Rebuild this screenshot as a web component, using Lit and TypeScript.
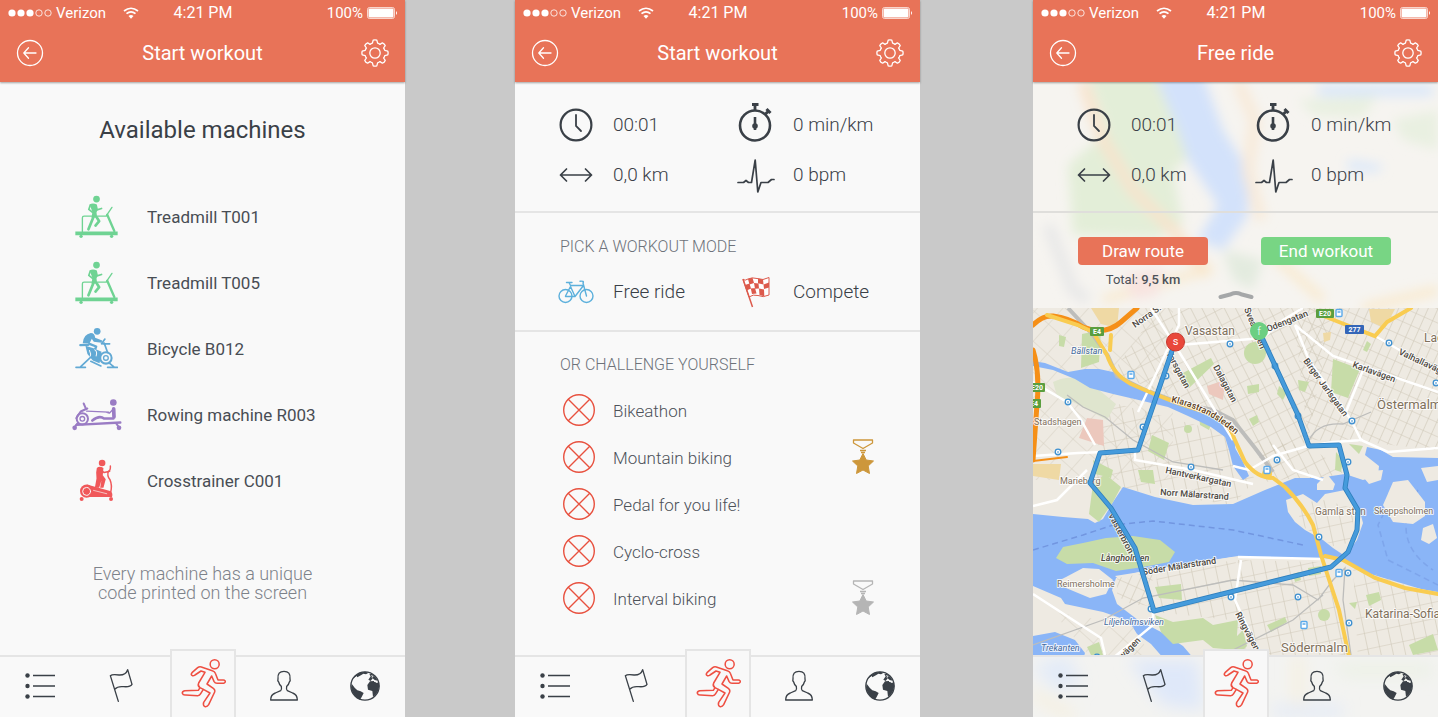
import { LitElement, html, svg, css } from "lit";
import { customElement, property } from "lit/decorators.js";

/* ---------- shared icon drawings ---------- */

const icons: Record<string, any> = {
  back: html`<svg width="28" height="28" viewBox="0 0 28 28" fill="none" stroke="#fff" stroke-width="1.3" stroke-linecap="round" stroke-linejoin="round"><circle cx="14" cy="14" r="12.5"/><path d="M20 14H8M12.5 8.7 7.8 14l4.7 5.3"/></svg>`,
  gear: html`<svg width="28" height="28" viewBox="-14 -14 28 28" fill="none" stroke="#fff" stroke-width="1.3" stroke-linejoin="round"><circle r="5.2"/><path d="M-1.8 -12.8Q0 -13.4 1.8 -12.8L2.6 -9.8 Q4 -9.4 5 -8.6 L7.4 -10.2Q9.400 -9.400 10.2 -7.4 L8.6 -5 Q9.4 -4 9.8 -2.6 L12.8 -1.8Q13.4 0 12.8 1.8L9.8 2.6 Q9.4 4 8.6 5 L10.2 7.4Q9.400 9.400 7.4 10.2 L5 8.6 Q4 9.4 2.6 9.8 L1.8 12.8Q0 13.4 -1.8 12.8L-2.6 9.8 Q-4 9.4 -5 8.6 L-7.4 10.2Q-9.400 9.400 -10.2 7.4 L-8.6 5 Q-9.4 4 -9.8 2.6 L-12.8 1.8Q-13.4 0 -12.8 -1.8L-9.8 -2.6 Q-9.4 -4 -8.6 -5 L-10.2 -7.4Q-9.400 -9.400 -7.4 -10.2 L-5 -8.6 Q-4 -9.4 -2.6 -9.8Z"/></svg>`,
  list: html`<svg width="32" height="28" viewBox="0 0 32 28" stroke="#3a4047" stroke-width="1.5" fill="#3a4047"><path d="M8 3.500h22M8 14h22M8 24.500h22"/><g stroke="none"><circle cx="2.5" cy="3.500" r="2.2"/><circle cx="2.5" cy="14" r="2.2"/><circle cx="2.5" cy="24.500" r="2.2"/></g></svg>`,
  flag: html`<svg width="26" height="36" viewBox="328 82 78 108" fill="none" stroke="#3a4047" stroke-width="4" stroke-linecap="round" stroke-linejoin="round"><path d="M356 182 332 105Q338 100 358 103Q378 104 384 87L397 131Q391 140 372 138Q354 136 346 145"/></svg>`,
  runner: html`<svg width="46" height="50" viewBox="544 55 138 150" fill="none" stroke="#ee4f42" stroke-width="4.6" stroke-linejoin="round" stroke-linecap="round"><circle cx="645" cy="74" r="13.5"/><path d="M638 93 605 82Q599 80 594 84L577 99Q572 105 578 108Q582 109 586 106L604 94 616 98 597 130Q593 139 601 144L596 152 555 153Q547 155 548 161Q550 167 558 166L594 168Q600 168 603 162L611 149 631 160 612 188Q609 198 616 201Q623 202 627 195L645 157Q647 150 641 146L622 133 636 109 643 125Q646 131 652 131L672 131Q679 128 676 123Q674 120 668 121L655 121 647 101Q645 95 638 93ZM601 144 611 149"/></svg>`,
  person: html`<svg width="30" height="32" viewBox="811 88 90 96" fill="none" stroke="#3a4047" stroke-width="4" stroke-linejoin="round"><path d="M816 178Q816 162 830 157L846 150Q850 147 848 137Q842 133 840 124Q836 120 838 114Q836 92 856 92Q876 92 874 114Q876 120 872 124Q870 133 864 137Q862 147 866 150L882 157Q896 162 896 178Z"/></svg>`,
  globe: html`<svg width="30" height="30" viewBox="0 0 90 90"><circle cx="45" cy="45" r="42.5" fill="none" stroke="#3a4047" stroke-width="4"/><g fill="#3a4047"><path d="M45 2Q20 4 10 22L20 15 22 19 34 12 40 8 48 10 56 5Z"/><path d="M5 38 14 50 22 58 32 61 41 66 35 78 30 86Q8 74 3 50Z"/><path d="M52 42 60 31 72 30 80 36 86 34 88 46Q86 62 76 73L69 77 67 60 54 56Z"/><path d="M55 26 62 16 58 10 66 8 78 20 83 29 74 27 68 22 62 30Z"/></g><path d="M64 14l5 2-3 4M72 31l6 1" stroke="#f8f8f8" stroke-width="3" fill="none"/></svg>`,
  clock: html`<svg width="34" height="34" viewBox="0 0 34 34" fill="none" stroke="#3a4047" stroke-width="2.2" stroke-linecap="round"><circle cx="17" cy="17" r="15.4"/><path d="M17 7v11l5 5" stroke-width="1.8"/></svg>`,
  distance: html`<svg width="34" height="16" viewBox="0 0 34 16" fill="none" stroke="#3a4047" stroke-width="1.7" stroke-linecap="round" stroke-linejoin="round"><path d="M1.5 8h31M7.5 2 1.5 8l6 6M26.500 2l6 6-6 6"/></svg>`,
  stopwatch: html`<svg width="36" height="47" viewBox="0 0 36 47" fill="none" stroke="#3a4047"><circle cx="17" cy="23.500" r="15" stroke-width="2.600"/><path d="M17 8V2M14 2.500h6.500" stroke-width="2.800"/><path d="m27.500 12 3-3M28.500 7l4 4" stroke-width="3"/><path d="M17 15v13" stroke-width="2.600"/><circle cx="17" cy="24" r="2.800" fill="#3a4047" stroke="none"/></svg>`,
  pulse: html`<svg width="38" height="36" viewBox="0 -1 38 36" fill="none" stroke="#3a4047" stroke-width="1.700" stroke-linejoin="round" stroke-linecap="round"><path d="M1 24.500H6.500L9 22.500 11.500 24.500H14.500L18.200 2 20.800 34 24 24.500H31L34.500 21.500H37"/></svg>`,
  bike: html`<svg width="36" height="24" viewBox="0 0 36 24" fill="none" stroke="#5cb0dc" stroke-width="1.400" stroke-linejoin="round" stroke-linecap="round"><circle cx="7.500" cy="16" r="6.500"/><circle cx="28.500" cy="16" r="6.500"/><path d="M7.500 16 12.500 6.500 17 16.500H7.500M17 16.500 25.500 5.500H12.500L11 2.500M8.500 2.500H14M28.500 16 25 3Q26.500 .8 22 1.200"/></svg>`,
  checkered: html`<svg width="28" height="31" viewBox="0 0 28 31"><path d="M1 2.500Q3 4 6 2Q10 0 15 1.500Q21 4 27 .5L27 18Q21 21 16 18.500Q11 17 7 20Z" fill="#fff" stroke="#dc5a4c" stroke-width="1"/><g fill="#dc5a4c"><path d="M6 2 10.500 .8 12 6 7.500 7.500ZM16 1.500l5 1 .5 5-5.500-1.200ZM3 8l4.500-1.500L9 11.500 4.500 13.500ZM12 6l4.500.5.500 5-4 .2ZM21.500 7.500 27 5.500v5l-5 1.500ZM8.800 11.500l4.200-.5 1.500 5.500-4.500.5ZM17 11.500l5 1 .3 6.800L17.500 18Z"/></g><path d="M1 2 10.500 30" stroke="#dc5a4c" stroke-width="1.500"/></svg>`,
  cross: html`<svg width="34" height="34" viewBox="0 0 34 34" fill="none" stroke="#e8513f" stroke-width="1.400"><circle cx="17" cy="16" r="15.300"/><path d="M6 5 28 27M28 5 6 27"/></svg>`,
  treadmill: html`<svg width="43" height="43" viewBox="45 40 128 128" fill="none" stroke="#6fd393" stroke-linecap="round" stroke-linejoin="round"><g fill="#6fd393" stroke="none"><circle cx="109" cy="52" r="10"/><path d="M46 149H172V160H46Z"/><circle cx="63" cy="163" r="5"/><circle cx="154" cy="163" r="5"/><path d="M88 68Q98 62 110 68L113 82 109 92 111 108H94L97 90Z"/></g><path d="M67 149V108Q67 103 72 103H138M138 102 155 77" stroke-width="4"/><path d="M141 99 162 147" stroke-width="7"/><path d="M90 71 86 83 98 92M108 85 124 80" stroke-width="5"/><path d="M99 108 85 142M110 107 117 118 106 131" stroke-width="8"/></svg>`,
  bicycle: html`<svg width="43" height="42" viewBox="45 440 128 125" fill="none" stroke="#62a9d4" stroke-linecap="round" stroke-linejoin="round"><g fill="#62a9d4" stroke="none"><circle cx="111" cy="453" r="10"/><path d="M68 488Q70 462 92 458Q104 458 105 472L126 480 124 487 101 484 95 475 88 489Z"/><path d="M76 496 100 503 124 514 118 548 98 540 82 520Z"/></g><circle cx="137" cy="532" r="17" stroke-width="6"/><circle cx="137" cy="532" r="7" stroke-width="4"/><path d="M61 494 84 493M88 490 108 498 100 520" stroke-width="7"/><path d="M88 510Q94 520 90 530M104 508Q112 512 108 526" stroke="#f9f9f9" stroke-width="3"/><path d="M124 490 134 476M128 490 148 490M132 488 142 516M48 560H76M142 560H171M62 558 92 530M148 548 160 558M92 542 122 556" stroke-width="5"/></svg>`,
  rowing: html`<svg width="50" height="33" viewBox="36 120 150 98" fill="none" stroke="#9a7cc4" stroke-linecap="round" stroke-linejoin="round"><g fill="#9a7cc4" stroke="none"><circle cx="160" cy="133" r="10"/><circle cx="44" cy="209" r="7"/><circle cx="177" cy="209" r="7"/></g><circle cx="67" cy="182" r="17" stroke-width="6"/><circle cx="67" cy="182" r="7" stroke-width="4"/><path d="M49 180 62 160 82 151M71 136 77 150M46 204 52 196M168 195 176 206" stroke-width="6"/><path d="M50 200 181 193" stroke-width="7"/><path d="M80 159 146 162M158 155 148 165 138 162" stroke-width="4"/><path d="M161 152 162 176" stroke-width="11"/><path d="M97 187Q118 170 132 181L160 181" stroke-width="8"/></svg>`,
  crosstrainer: html`<svg width="35" height="43" viewBox="56 300 106 128" fill="none" stroke="#f0585a" stroke-linecap="round" stroke-linejoin="round"><g fill="#f0585a" stroke="none"><circle cx="126" cy="311" r="10"/><path d="M110 326Q118 318 130 326L128 348 137 360 130 386 120 386 124 364 117 386H104L109 358 108 340Z"/><circle cx="79" cy="396" r="20"/><path d="M80 376 150 396Q160 402 156 414L84 414Z"/><circle cx="64" cy="420" r="6"/><circle cx="153" cy="420" r="6"/></g><circle cx="79" cy="397" r="12" stroke="#f9f9f9" stroke-width="3"/><path d="M122 332 132 340 149 336M151 320Q152 334 145 336Q140 350 150 362Q157 378 152 400" stroke-width="4.500"/><path d="M100 394 140 404" stroke="#f9f9f9" stroke-width="2"/></svg>`,
  wifi: html`<svg width="16" height="12" viewBox="0 0 16 12" fill="none" stroke="#fff" stroke-width="1.700"><path d="M1 4Q8-1.500 15 4M3.500 6.700Q8 3 12.500 6.700"/><path d="M5.500 9Q8 7 10.500 9L8 11.800Z" fill="#fff" stroke="none"/></svg>`,
  battery: html`<svg width="31" height="12" viewBox="0 0 31 12"><rect x=".5" y=".5" width="27" height="11" rx="2" fill="none" stroke="#fff" stroke-opacity=".7"/><rect x="1.500" y="1.500" width="25" height="9" rx="1" fill="#fff"/><path d="M29 4Q31 6 29 8Z" fill="#fff"/></svg>`,
  signal: html`<svg width="45" height="8" viewBox="0 0 45 8" fill="#fff"><circle cx="4" cy="4" r="3.600"/><circle cx="13" cy="4" r="3.600"/><circle cx="22" cy="4" r="3.600"/><g fill="none" stroke="#fff" stroke-width=".8"><circle cx="31" cy="4" r="3.200"/><circle cx="40" cy="4" r="3.200"/></g></svg>`,
  chevron: html`<svg width="36" height="10" viewBox="0 0 36 10" fill="none" stroke="#a5a7a8" stroke-width="4" stroke-linecap="round" stroke-linejoin="round"><path d="M2.500 7 13 4.200Q18 2 23 4.200L33.500 7"/></svg>`,
};

const medal = (color: string) => html`<svg width="24" height="38" viewBox="0 0 24 38" fill="none" stroke=${color} stroke-linejoin="round"><path d="M2.500 1H21.500V4L12 9.500 2.500 4Z" stroke-width="1.300"/><path d="M9 11.500H15M10 13.500H14" stroke-width="1.500"/><path d="M12 14.500 15.200 21 22.500 22 17.200 27 18.500 34.500 12 31 5.500 34.500 6.800 27 1.500 22 8.800 21Z" fill=${color} stroke-width="1"/></svg>`;

const base = css`
  :host { display: block; font-family: Roboto, sans-serif; color: #3a4047; }
  * { box-sizing: border-box; }
  svg { display: block; flex: none; }
  button { font: inherit; color: inherit; background: none; border: 0; padding: 0; margin: 0; text-align: left; cursor: pointer; }
  ul { list-style: none; margin: 0; padding: 0; }
  h1, h2, p { margin: 0; font-weight: 400; }
`;

/* ---------- header ---------- */

@customElement("top-bar")
class TopBar extends LitElement {
  @property() heading = "";
  static styles = [base, css`
    :host { position: relative; z-index: 2; height: 82px; background: #e87358; color: #fff; box-shadow: 0 1px 2px rgba(0, 0, 0, .35); }
    .status { display: grid; grid-template-columns: 1fr auto 1fr; align-items: center; height: 26px; padding: 0 7px 0 8px; font-size: 15px; line-height: 18px; }
    .carrier { display: flex; align-items: center; gap: 3px; }
    .wifi { margin-left: 14px; }
    .time { font-size: 16px; }
    .power { display: flex; align-items: center; justify-content: flex-end; gap: 4px; }
    .bar { display: flex; align-items: center; justify-content: space-between; height: 53px; padding: 0 16px; }
    h1 { font-size: 20px; line-height: 24px; }
  `];
  render() {
    return html`
      <div class="status">
        <div class="carrier">${icons.signal}<span>Verizon</span><span class="wifi">${icons.wifi}</span></div>
        <span class="time">4:21 PM</span>
        <div class="power"><span>100%</span>${icons.battery}</div>
      </div>
      <div class="bar">
        <button aria-label="Back">${icons.back}</button>
        <h1>${this.heading}</h1>
        <button aria-label="Settings">${icons.gear}</button>
      </div>`;
  }
}

/* ---------- bottom tabs ---------- */

@customElement("tab-bar")
class TabBar extends LitElement {
  static styles = [base, css`
    nav { display: grid; grid-template-columns: repeat(5, 1fr); height: 62px; border-top: 2px solid #e5e5e5; }
    a { display: grid; place-items: center; padding-bottom: 3px; }
    .active { justify-self: center; width: 66px; margin-top: -8px; padding: 0 0 2px 2px; background: #f8f8f8; border: 2px solid #e5e5e5; border-bottom: 0; }
  `];
  render() {
    return html`<nav>
      <a href="#list" aria-label="List">${icons.list}</a>
      <a href="#goals" aria-label="Goals">${icons.flag}</a>
      <a class="active" href="#workout" aria-label="Workout">${icons.runner}</a>
      <a href="#profile" aria-label="Profile">${icons.person}</a>
      <a href="#world" aria-label="World">${icons.globe}</a>
    </nav>`;
  }
}

/* ---------- live statistics ---------- */

@customElement("workout-stats")
class WorkoutStats extends LitElement {
  static styles = [base, css`
    ul { display: grid; grid-template-columns: 1fr 1fr; grid-template-rows: 50px 50px; height: 131px; padding: 18px 2px 0 43px; border-bottom: 2px solid #e5e5e5; }
    :host([clear]) ul { border-color: #dfdedb; }
    li { display: flex; align-items: center; gap: 19px; font-size: 19px; line-height: 24px; font-weight: 300; }
    .slot { display: flex; justify-content: center; width: 36px; }
  `];
  render() {
    const stats = [["clock", "00:01"], ["stopwatch", "0 min/km"], ["distance", "0,0 km"], ["pulse", "0 bpm"]];
    return html`<ul>${stats.map(([icon, value]) => html`<li><span class="slot">${icons[icon]}</span>${value}</li>`)}</ul>`;
  }
}

/* ---------- screens ---------- */

@customElement("machines-screen")
class MachinesScreen extends LitElement {
  static styles = [base, css`
    :host { display: flex; flex-direction: column; flex: 1; }
    main { flex: 1; }
    h2 { padding-top: 34px; font-size: 24px; line-height: 28px; text-align: center; }
    ul { padding: 40px 0 0 70px; }
    .machine { display: flex; align-items: center; gap: 24px; width: 100%; height: 66px; font-size: 17px; line-height: 20px; color: #484d54; }
    .slot { display: flex; justify-content: center; width: 53px; padding-bottom: 2px; }
    p { padding-top: 50px; font-size: 18px; line-height: 19px; font-weight: 300; color: #7d828a; text-align: center; }
  `];
  render() {
    const machines = [
      ["treadmill", "Treadmill T001"],
      ["treadmill", "Treadmill T005"],
      ["bicycle", "Bicycle B012"],
      ["rowing", "Rowing machine R003"],
      ["crosstrainer", "Crosstrainer C001"],
    ];
    return html`
      <top-bar heading="Start workout"></top-bar>
      <main>
        <h2>Available machines</h2>
        <ul>${machines.map(([icon, name]) => html`<li><button class="machine"><span class="slot">${icons[icon]}</span>${name}</button></li>`)}</ul>
        <p>Every machine has a unique<br>code printed on the screen</p>
      </main>
      <tab-bar></tab-bar>`;
  }
}

@customElement("modes-screen")
class ModesScreen extends LitElement {
  static styles = [base, css`
    :host { display: flex; flex-direction: column; flex: 1; }
    main { flex: 1; }
    h2 { padding-left: 45px; font-size: 16px; line-height: 20px; font-weight: 300; color: #6d727a; }
    .modes { height: 119px; padding-top: 24px; border-bottom: 2px solid #e5e5e5; }
    .choices { display: grid; grid-template-columns: 1fr 1fr; padding: 15px 2px 0 43px; }
    .mode { display: flex; align-items: center; gap: 19px; height: 40px; font-size: 19px; line-height: 24px; font-weight: 300; }
    .slot { display: flex; justify-content: center; width: 36px; }
    .challenges { padding-top: 23px; }
    .items { padding: 12px 45px 0 47px; }
    .challenge { display: grid; grid-template-columns: 34px 1fr auto; align-items: center; column-gap: 17px; width: 100%; height: 47px; font-size: 17px; line-height: 20px; font-weight: 300; color: #4d5259; }
  `];
  render() {
    const challenges: [string, string?][] = [
      ["Bikeathon"], ["Mountain biking", "#cd973b"], ["Pedal for you life!"], ["Cyclo-cross"], ["Interval biking", "#b5b5b5"],
    ];
    return html`
      <top-bar heading="Start workout"></top-bar>
      <main>
        <workout-stats></workout-stats>
        <section class="modes">
          <h2>PICK A WORKOUT MODE</h2>
          <div class="choices">
            <button class="mode"><span class="slot">${icons.bike}</span>Free ride</button>
            <button class="mode"><span class="slot">${icons.checkered}</span>Compete</button>
          </div>
        </section>
        <section class="challenges">
          <h2>OR CHALLENGE YOURSELF</h2>
          <ul class="items">${challenges.map(([name, color]) => html`<li><button class="challenge">${icons.cross}<span>${name}</span>${color ? medal(color) : ""}</button></li>`)}</ul>
        </section>
      </main>
      <tab-bar></tab-bar>`;
  }
}

/* ---------- map ---------- */

const route = "M142 342 105 450 67 453 57 483 78 508 102 548 121 611 298 567 315 552 324 530 325 510 312 488 314 475 306 445 276 446 265 415 226 331";

const stops = [[197, 344], [133, 376], [110, 427], [35, 402], [25, 452], [158, 467], [242, 366], [265, 416], [319, 421], [356, 343], [403, 383], [244, 460], [315, 462], [286, 537], [315, 573], [265, 597], [316, 623], [198, 597], [118, 609], [64, 657]];
const stations = [[98, 375], [234, 470], [306, 573], [271, 625], [306, 313]];

const roadLabels: [number, number, number, string][] = [
  [102, 328, -35, "Norra S."], [133, 353, 62, "Torsgatan"], [180, 367, 62, "Dalagatan"],
  [132, 473, 12, "Hantverkargatan"], [127, 495, 4, "Norr Mälarstrand"], [75, 515, 62, "Västerbron"],
  [110, 575, -9, "Söder Mälarstrand"], [91, 658, -45, "vägen"], [202, 614, 62, "Ringvägen"],
  [365, 354, 25, "Valhallavägen"], [319, 367, 20, "Karlavägen"], [270, 361, 54, "Birger Jarlsgatan"],
  [235, 332, -22, "Odengatan"], [211, 309, 68, "Sveavägen"],
];
const areas: [number, number, number, string][] = [
  [152, 335, 12, "Vasastan"], [1, 425, 9, "Stadshagen"], [27, 484, 9, "Marieberg"], [24, 587, 9, "Reimersholme"],
  [248, 652, 13, "Södermalm"], [332, 618, 12, "Katarina-Sofia"], [282, 515, 10, "Gamla stan"],
  [341, 514, 9, "Skeppsholmen"], [344, 409, 13, "Östermalm"], [391, 342, 12, "Ladugård"],
];
const waters: [number, number, string][] = [[38, 354, "Bällstan"], [71, 625, "Liljeholmsviken"], [8, 651, "Trekanten"]];
const shields: [number, number, number, string, string][] = [
  [57, 327, 14, "E4", "#5a9e3f"], [-4, 383, 16, "E20", "#5a9e3f"], [-6, 399, 14, "E4", "#5a9e3f"],
  [283, 309, 18, "E20", "#5a9e3f"], [312, 325, 19, "277", "#3466b8"],
];

@customElement("city-map")
class CityMap extends LitElement {
  static styles = [base, css`
    :host { display: flex; flex: 1 1 300px; min-height: 0; overflow: hidden; }
    svg { width: 100%; height: 100%; flex: 1; font-family: Roboto, sans-serif; }
    .halo { paint-order: stroke; stroke: #fff; stroke-opacity: .8; stroke-width: 2px; stroke-linejoin: round; }
    .road { font-size: 9px; font-weight: 500; fill: #4c4740; }
    .brown { fill: #5c3d20; }
    .area { fill: #80705c; }
    .water { font-size: 9px; font-style: italic; fill: #466a9d; }
    .shield { font-size: 7px; font-weight: 700; fill: #fff; text-anchor: middle; }
    .pin { font-size: 11px; fill: #fff; text-anchor: middle; }
  `];
  render() {
    return html`<svg viewBox="0 308 405 347" preserveAspectRatio="xMidYMin slice" role="img" aria-label="Route map">
      <defs>
        <pattern id="grid-a" width="10" height="15" patternUnits="userSpaceOnUse" patternTransform="rotate(-27)"><path d="M0 0H10M0 0V15" stroke="#cfc8b8" stroke-width="1.200" fill="none"/></pattern>
        <pattern id="grid-b" width="9" height="13" patternUnits="userSpaceOnUse" patternTransform="rotate(24)"><path d="M0 0H9M0 0V13" stroke="#cfc8b8" stroke-width="1.200" fill="none"/></pattern>
        <pattern id="grid-c" width="12" height="16" patternUnits="userSpaceOnUse" patternTransform="rotate(-12)"><path d="M0 0H12M0 0V16" stroke="#cfc8b8" stroke-width="1.200" fill="none"/></pattern>
        <pattern id="grid-d" width="19" height="23" patternUnits="userSpaceOnUse" patternTransform="rotate(42)"><path d="M0 0H19M0 0V23" stroke="#d6cfc1" stroke-width="1" fill="none"/></pattern>
      </defs>
      <path d="M0 308H405V660H0Z" fill="#eeeae2"/>
      <path d="M0 308H140V480H0Z" fill="url(#grid-d)"/>
      <path d="M108 308H300L275 440 240 470 205 430 140 398 80 372 110 330Z" fill="url(#grid-a)"/>
      <path d="M260 308H405V450L330 442 275 440Z" fill="url(#grid-b)"/>
      <path d="M70 400 200 435 222 480 200 505 60 485Z" fill="url(#grid-c)"/>
      <path d="M222 440 276 446 312 472 285 480 262 478 232 482Z" fill="url(#grid-a)"/>

      <g fill="#c7dca8">
        <path d="M49 334 68 330 66 362 48 368ZM26 335 33 337 31 347 26 346ZM148 374 178 358 181 364 156 388 148 385ZM300 359 327 369 315 398 298 392ZM119 435 136 443 131 460 115 451ZM166 415 180 419 176 430 167 425ZM334 341 338 344 334 352 330 350ZM265 380 276 382 272 392 266 390ZM214 386 226 384 226 392 215 394ZM246 386 254 392 250 400 244 394ZM216 419 224 415 226 422 220 426Z"/>
        <circle cx="222" cy="353" r="11"/><circle cx="155" cy="429" r="4"/>
        <path d="M105 470 120 470 122 484 108 482ZM60 460 80 470 78 478 62 474ZM316 444 330 446 326 454ZM303 452 310 460 308 472 302 470Z"/>
      </g>
      <path d="M20 382Q40 372 60 385L83 404 74 420 40 402 24 396Z" fill="#dfe5ce"/>
      <g fill="#ecc8bd"><path d="M54 418 70 420 71 446 46 438ZM174 386 192 380 190 400 176 394Z"/></g>
      <g fill="#efd9a4"><path d="M58 308 86 308 84 328 68 324ZM336 309 362 309 352 328 338 322ZM0 464 28 464 26 480 0 476ZM290 333 298 332 297 340 291 342Z"/></g>

      <g fill="#8ab5f7">
        <path d="M0 361 12 363 35 372 52 369 66 369 80 372 97 381 120 393 140 400 168 409 188 420 203 438 202 448 210 462 216 476 210 480 200 466 196 450 192 437 178 427 155 416 135 407 110 401 80 394 57 388 42 379 20 370 0 366Z"/>
        <path d="M0 514 30 517 55 519 62 523 70 519 80 502 90 487 122 497 160 505 200 504 232 490 262 478 285 478 312 474 330 480 345 476 346 466 332 455 334 447 348 450 360 457 405 458V592L370 586 340 575 310 560 290 558 230 558 205 556 160 563 110 571 83 578 79 590 84 604 105 620 128 632 150 646 162 660H132L118 644 104 634 96 621 70 612 32 604 28 598 0 586Z"/>
        <path d="M0 636 22 632 42 640 52 653 50 660H0Z"/>
      </g>
      <g fill="none" stroke="#7296e0" stroke-width="1.500" stroke-dasharray="6 4"><path d="M0 550 50 535 80 525 120 521 200 530 270 545"/><path d="M360 495 345 525 355 560 405 585M385 490Q355 540 400 570" stroke-opacity=".5"/></g>

      <path d="M23 558 30 547 50 543 73 538 100 536 127 540 142 552 136 562 110 567 83 571 60 563 34 564Z" fill="#c7dca8"/>
      <path d="M33 577 50 568 66 569 80 580 73 594 57 598 33 588 25 581Z" fill="#eeeae2"/>
      <path d="M253 500 270 494 284 503 292 494 312 490 326 508 330 523 324 540 312 556 300 548 290 540 272 530 262 522 255 512Z" fill="#eeeae2"/>
      <path d="M260 504 290 500 320 508 320 542 300 546 272 528Z" fill="url(#grid-c)"/>
      <path d="M284 484 294 474 302 484 300 490 284 490Z" fill="#eeeae2"/>
      <path d="M350 505 360 482 375 480 392 502 392 516 380 524 360 522Z" fill="#eeeae2"/>
      <path d="M390 528 400 524 404 538 396 544 388 540ZM326 472 350 470 348 480 336 484ZM388 468 405 466V480L394 482Z" fill="#eeeae2"/>
      <path d="M82 576 200 557 290 560 405 594V660H165L118 606Z" fill="#eeeae2"/>
      <path d="M84 578 120 572 118 606 98 604 84 596Z" fill="url(#grid-b)"/>
      <path d="M124 572 203 560 198 620 122 612ZM205 560 290 562 318 660H190ZM320 566 405 596V660H325Z" fill="url(#grid-c)"/>
      <path d="M20 612 100 625 120 660H60Z" fill="url(#grid-d)"/>
      <g fill="#c7dca8">
        <path d="M122 615 140 622 170 618 180 625 205 620 203 650 180 648 170 640 140 644 128 632ZM122 587 148 584 149 600 126 598ZM60 484 72 474 88 487 80 502 66 522 56 514ZM275 568 288 566 288 574 276 576ZM234 625 252 617 254 622 238 632ZM333 595 346 592 348 600 336 606ZM316 603 324 602 322 609ZM260 574 266 572 268 580 262 582ZM200 640 210 630 214 646 204 656ZM376 645 400 634 405 650 380 655Z"/>
        <circle cx="291" cy="615" r="6"/><path d="M54 647 66 642 70 655H58Z"/>
      </g>

      <g fill="none" stroke="#bdbdbb" stroke-width="2.500">
        <path d="M35 308 60 335 75 356 84 376 110 389 150 404 180 410 200 420 222 448 240 472" stroke-width="4"/>
        <path d="M34 395 50 407 72 417 100 440 140 462 190 470M0 645 70 620 110 598 200 580 260 585 285 600 300 580 312 568 310 600 318 655M200 650 260 620 290 595M276 440Q285 422 310 424L338 412" stroke-width="1.300"/>
      </g>
      <g fill="none" stroke="#fff" stroke-width="2.500">
        <path d="M146 308 146 325 105 412M118 308 145 350 200 440M146 345 230 338 250 320 270 308M262 325 300 356 405 392M262 325 276 360 318 420 328 440 355 452 405 448M342 336 405 372M0 456 45 453 70 452 105 450M102 452 102 460 160 470 220 484M275 446 240 456 216 470 200 466M276 446 300 442 330 440M0 506 24 500 42 482 54 470M0 594 40 620 68 638 72 655M120 612 120 625 80 658M208 560 202 600 225 650M290 480 260 470 240 445M205 557 290 559M0 382 34 402 48 420 62 445M330 370 313 412"/>
      </g>
      <g fill="none" stroke-linecap="round">
        <path d="M0 325Q10 315 20 316 36 318 50 327 72 336 88 322L104 308M0 350Q7 372 4 404L0 460" stroke="#f58f17" stroke-width="5"/>
        <path d="M0 461 34 457" stroke="#f58f17" stroke-width="2"/>
        <path d="M14 315 45 325 60 332 74 355Q80 374 98 384 120 394 142 402L178 414Q196 422 201 438L212 462Q224 478 240 478L252 487Q270 505 280 525L288 555 306 610 316 656M292 556 310 560 342 578 372 588 405 594M288 315 342 336 354 322 378 308M78 335 77 350" stroke="#f9cc51" stroke-width="4"/>
        <circle cx="234" cy="474" r="5" fill="#f9cc51"/>
      </g>

      ${stops.map(([x, y]) => svg`<circle cx=${x} cy=${y} r="2.800" fill="#fff" stroke="#3c8fd0" stroke-width="1.300"/><path d=${`M${x} ${y - 1}v2.500`} stroke="#3c8fd0"/>`)}
      ${stations.map(([x, y]) => svg`<rect x=${x - 3} y=${y - 3.5} width="6" height="7" rx="1" fill="#fff" stroke="#5aa9ea" stroke-width="1.400"/><path d=${`M${x - 1.5} ${y - 1}h3`} stroke="#5aa9ea" stroke-width="1.500"/>`)}

      ${roadLabels.map(([x, y, r, t]) => svg`<text class="road halo" transform=${`translate(${x} ${y}) rotate(${r})`}>${t}</text>`)}
      <defs><path id="klara" d="M138 402Q176 410 204 436"/></defs>
      <text class="road brown halo"><textPath href="#klara">Klarastrandsleden</textPath></text>
      <text class="road halo" x="68" y="561" font-style="italic">Långholmen</text>
      ${areas.map(([x, y, s, t]) => svg`<text class="area halo" x=${x} y=${y} font-size=${s}>${t}</text>`)}
      ${waters.map(([x, y, t]) => svg`<text class="water halo" x=${x} y=${y}>${t}</text>`)}
      ${shields.map(([x, y, w, t, c]) => svg`<rect x=${x} y=${y} width=${w} height="9" rx="1" fill=${c}/><text class="shield" x=${x + w / 2} y=${y + 7}>${t}</text>`)}

      <path d=${route} fill="none" stroke="#2f7fbd" stroke-width="5" stroke-linejoin="round"/>
      <path d=${route} fill="none" stroke="#459bdc" stroke-width="3.400" stroke-linejoin="round"/>
      <circle cx="142.500" cy="342" r="9" fill="#e9483b" stroke="#c9382d"/><text class="pin" x="142.500" y="345">s</text>
      <circle cx="226" cy="331" r="9" fill="#6ccf82"/><text class="pin" x="226" y="335" font-weight="300">f</text>
    </svg>`;
  }
}

@customElement("ride-screen")
class RideScreen extends LitElement {
  static styles = [base, css`
    :host { display: flex; flex-direction: column; flex: 1; min-height: 0; }
    main { display: flex; flex-direction: column; flex: 1; }
    .panel, .tabs { position: relative; overflow: hidden; background: #f6f4f0; }
    .tabs { overflow: visible; }
    .haze { position: absolute; inset: 0; width: 100%; height: 100%; }
    .content { position: relative; }
    .actions { display: flex; justify-content: space-between; padding: 24px 47px 0 45px; }
    .action { width: 130px; }
    .action button { width: 100%; height: 28px; border-radius: 4px; color: #fff; font-size: 17px; line-height: 20px; text-align: center; }
    .draw { background: #e87358; }
    .end { background: #78d584; }
    .total { padding-top: 6px; font-size: 13px; line-height: 18px; text-align: center; color: #4d5259; }
    .total b { font-weight: 500; }
    .handle { display: flex; margin: 1px auto 0; padding-bottom: 8px; }
  `];
  render() {
    return html`
      <top-bar heading="Free ride"></top-bar>
      <main>
        <section class="panel">
          <svg class="haze" viewBox="0 82 405 226" preserveAspectRatio="none" aria-hidden="true">
            <defs><filter id="soft" x="-20%" y="-20%" width="140%" height="140%"><feGaussianBlur stdDeviation="6"/></filter></defs>
            <g filter="url(#soft)">
              <path d="M55 75H120L145 120 165 150 140 170 150 225 125 238 40 235 35 165 75 130Z" fill="#e3eed8"/>
              <path d="M120 70H168L190 130 215 170 215 215 190 250 165 240 185 205 155 160 145 130Z" fill="#d3e2fb"/>
              <path d="M50 82 70 140 100 190 140 230 175 275" fill="none" stroke="#f8e3cc" stroke-width="11"/>
              <path d="M205 82 222 120 215 170 228 220" fill="none" stroke="#f8ead9" stroke-width="12"/>
              <path d="M285 85H400V96H285ZM315 160 350 165 345 172 315 170Z" fill="#d9e7fa"/>
              <path d="M360 120 405 110V150L370 140ZM265 100 345 95 330 118 280 115Z" fill="#e9f0e1"/>
              <path d="M15 225 40 290 55 300" stroke="#e8e8e8" stroke-width="12" fill="none"/>
              <path d="M190 250 230 260 220 290 200 280Z" fill="#e3ebdf"/>
              <path d="M70 300 180 268M240 255 290 300M330 308 405 290" stroke="#f9e9cc" stroke-width="8"/>
              <path d="M90 275 130 268 125 295 100 300Z" fill="#f8e4e0"/>
            </g>
          </svg>
          <div class="content">
            <workout-stats clear></workout-stats>
            <div class="actions">
              <div class="action"><button class="draw">Draw route</button><p class="total">Total: <b>9,5 km</b></p></div>
              <div class="action"><button class="end">End workout</button></div>
            </div>
            <button class="handle" aria-label="Collapse panel">${icons.chevron}</button>
          </div>
        </section>
        <city-map></city-map>
      </main>
      <div class="tabs">
        <svg class="haze" viewBox="0 0 405 62" preserveAspectRatio="none" aria-hidden="true">
          <defs><filter id="mist" x="-10%" y="-30%" width="120%" height="160%"><feGaussianBlur stdDeviation="8"/></filter></defs>
          <rect width="405" height="62" fill="#f3f3f1"/>
          <g filter="url(#mist)">
            <path d="M0 10 35 0 50 30 20 35Z" fill="#e3ebf8"/><path d="M95 5H165L170 55 130 50Z" fill="#dfe8f9"/>
            <path d="M0 38 40 62M265 0V62" stroke="#f6efdc" stroke-width="9"/><path d="M300 8H400V22H310ZM190 30 230 40 225 60Z" fill="#ecf1e6"/><path d="M240 50H310V62H240Z" fill="#e4ebf7"/>
          </g>
        </svg>
        <div class="content"><tab-bar></tab-bar></div>
      </div>`;
  }
}

@customElement("app-root")
class AppRoot extends LitElement {
  static styles = [base, css`
    :host { min-height: 100vh; background: #c9c9c9; }
    .board { display: grid; grid-template-columns: 405fr 110fr 405fr 113fr 405fr; min-height: 100vh; }
    .phone { display: flex; flex-direction: column; min-width: 0; background: #f9f9f9; }
    .second { grid-column: 3; }
    .third { grid-column: 5; }
  `];
  render() {
    return html`<div class="board">
      <article class="phone"><machines-screen></machines-screen></article>
      <article class="phone second"><modes-screen></modes-screen></article>
      <article class="phone third"><ride-screen></ride-screen></article>
    </div>`;
  }
}
